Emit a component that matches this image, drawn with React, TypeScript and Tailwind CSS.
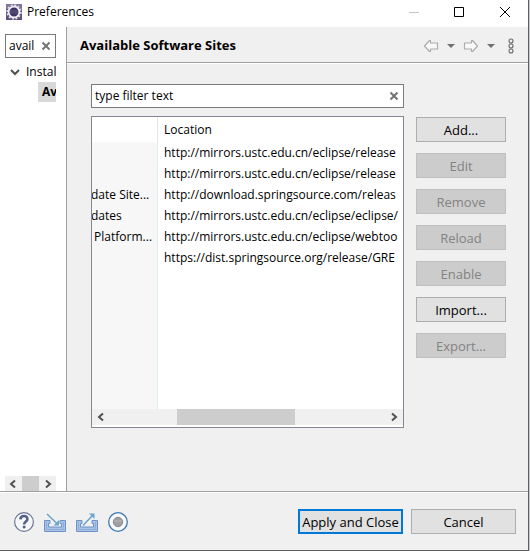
import React from "react";

const updateSites = [
  { name: "", location: "http://mirrors.ustc.edu.cn/eclipse/release" },
  { name: "", location: "http://mirrors.ustc.edu.cn/eclipse/release" },
  { name: "date Site...", location: "http://download.springsource.com/releas" },
  { name: "dates", location: "http://mirrors.ustc.edu.cn/eclipse/eclipse/" },
  { name: " Platform...", location: "http://mirrors.ustc.edu.cn/eclipse/webtoo" },
  { name: "", location: "https://dist.springsource.org/release/GRE" },
];

const siteActions = [
  { label: "Add...", enabled: true },
  { label: "Edit", enabled: false },
  { label: "Remove", enabled: false },
  { label: "Reload", enabled: false },
  { label: "Enable", enabled: false },
  { label: "Import...", enabled: true },
  { label: "Export...", enabled: false },
];

function EclipseLogo() {
  return (
    <svg width="16" height="16" viewBox="0 0 16 16" aria-hidden="true">
      <rect width="16" height="16" fill="#5c4f7a" />
      <path d="M0 0h16v5H0z" fill="#81759a" />
      <circle cx="8" cy="8" r="6.8" fill="none" stroke="#dcd8e2" strokeWidth="1.8" strokeDasharray="2 1.56" />
      <circle cx="8" cy="8" r="5.4" fill="#3d3560" stroke="#f1eef4" strokeWidth="1.8" />
      <path d="M4 7h8M4 9h8" stroke="#6c648c" strokeWidth="0.8" />
    </svg>
  );
}

function Cross() {
  return (
    <svg width="10" height="10" viewBox="0 0 10 10" aria-hidden="true">
      <path d="M1.5 1.5l7 7M8.5 1.5l-7 7" stroke="#737373" strokeWidth="2" />
    </svg>
  );
}

function Chevron({ direction }: { direction: "left" | "right" | "down" }) {
  const paths = {
    left: "M7 1.5L3 5l4 3.5",
    right: "M3 1.5L7 5 3 8.5",
    down: "M1 3l4 4 4-4",
  };
  return (
    <svg width="10" height="10" viewBox="0 0 10 10" className="shrink-0" aria-hidden="true">
      <path d={paths[direction]} fill="none" stroke="#505050" strokeWidth="2" />
    </svg>
  );
}

function NavArrow({ forward = false }: { forward?: boolean }) {
  return (
    <svg width="16" height="14" viewBox="0 0 16 14" aria-hidden="true">
      <path
        d={
          forward
            ? "M1.5 4h7V1.5h1L14.5 7l-5 5.5h-1V10h-7z"
            : "M14.5 4h-7V1.5h-1L1.5 7l5 5.5h1V10h7z"
        }
        fill="#f8f8f8"
        stroke="#acacac"
        strokeWidth="1.2"
        strokeLinejoin="round"
      />
    </svg>
  );
}

function Triangle() {
  return (
    <svg width="8" height="4" viewBox="0 0 8 4" aria-hidden="true">
      <path d="M0 0h8L4 4z" fill="#707070" />
    </svg>
  );
}

function MenuDots() {
  return (
    <svg width="6" height="16" viewBox="0 0 6 16" fill="none" stroke="#6a6a6a" strokeWidth="1.1" aria-hidden="true">
      <circle cx="3" cy="3" r="2" />
      <circle cx="3" cy="8" r="2" />
      <circle cx="3" cy="13" r="2" />
    </svg>
  );
}

function HelpIcon() {
  return (
    <svg width="20" height="20" viewBox="0 0 20 20" fill="none" aria-hidden="true">
      <circle cx="10" cy="10" r="9.4" fill="#f6f7fa" stroke="#6b7794" strokeWidth="1.2" />
      <path d="M6.4 7.4C6.6 2.9 13.6 3 13.4 7.2c0 2.3-3.3 2.4-3.3 5.2" stroke="#50618a" strokeWidth="2.6" />
      <path d="M8.8 13.8h2.7v2.5H8.8z" fill="#50618a" />
    </svg>
  );
}

function TrayIcon({ outgoing = false }: { outgoing?: boolean }) {
  return (
    <svg width="22" height="20" viewBox="0 0 22 20" fill="none" aria-hidden="true">
      <path
        d="M0.5 8.5H6v3H4.5V15h13v-3.5H16v-3h5.5v11h-21z"
        fill="#a9c3e6"
        stroke="#6f91c6"
      />
      <path d="M2.5 10v7.5h17V10" stroke="#8fabd8" />
      {outgoing ? (
        <g>
          <path d="M7 13.5L17 3" stroke="#69a5cd" strokeWidth="1.5" />
          <path d="M13 1.5h5.5V7z" fill="#69a5cd" />
        </g>
      ) : (
        <g>
          <path d="M3 2l10 9.5" stroke="#69a5cd" strokeWidth="1.5" />
          <path d="M15 8v5.5H9.5z" fill="#69a5cd" />
        </g>
      )}
    </svg>
  );
}

function RecordIcon() {
  return (
    <svg width="20" height="20" viewBox="0 0 20 20" aria-hidden="true">
      <circle cx="10" cy="10" r="9.3" fill="#f7fbff" stroke="#3f78b0" strokeWidth="1.3" />
      <circle cx="10" cy="10" r="4.7" fill="#a0a0a0" stroke="#878787" />
      <path d="M6 9h8" stroke="#b9b9b9" />
    </svg>
  );
}

function FilterBox({ id, label, value }: { id: string; label: string; value: string }) {
  return (
    <div className="flex h-6 items-center border border-[#7a7a7a] bg-white pr-1">
      <input
        id={id}
        aria-label={label}
        defaultValue={value}
        className="min-w-0 flex-1 pl-[3px] text-[12px] leading-5 outline-none"
      />
      <button type="button" aria-label={`Clear ${label}`}><Cross /></button>
    </div>
  );
}

function Titlebar() {
  return (
    <header className="flex h-[27px] shrink-0 items-center bg-white pb-1 pl-1.5">
      <EclipseLogo />
      <h1 className="flex-1 pl-[5px] text-[12px] leading-5">Preferences</h1>
      <div className="flex items-center">
        <button type="button" aria-label="Minimize" className="flex w-[45px] justify-center">
          <svg width="10" height="10" viewBox="0 0 10 10"><path d="M0 5.5h10" stroke="#c4c4c4" /></svg>
        </button>
        <button type="button" aria-label="Maximize" className="flex w-[45px] justify-center">
          <svg width="10" height="10" viewBox="0 0 10 10" fill="none"><path d="M.5.5h9v9h-9z" stroke="#000" /></svg>
        </button>
        <button type="button" aria-label="Close" className="flex w-[47px] justify-center">
          <svg width="10" height="10" viewBox="0 0 10 10"><path d="M0 0l10 10M10 0L0 10" stroke="#000" /></svg>
        </button>
      </div>
    </header>
  );
}

function Sidebar() {
  return (
    <aside className="flex w-[67px] shrink-0 flex-col border-r border-[#a0a0a0] bg-white pt-[7px] pr-[10px] pl-[5px]">
      <FilterBox id="page-filter" label="page filter" value="avail" />
      <ul className="flex-1 overflow-hidden pt-1 text-[12px] whitespace-nowrap">
        <li>
          <div className="flex h-5 items-center gap-1.5 pl-[5px]">
            <Chevron direction="down" />
            <span>Instal</span>
          </div>
          <ul className="pl-[33px]">
            <li className="h-5 overflow-hidden bg-[#d9d9d9] pl-1 leading-5 font-bold">Av</li>
          </ul>
        </li>
      </ul>
      <div className="flex h-[15px] items-center justify-between bg-[#f0f0f0] px-[3px]">
        <button type="button" aria-label="Scroll tree left"><Chevron direction="left" /></button>
        <div className="h-full w-[17px] bg-[#cdcdcd]" />
        <button type="button" aria-label="Scroll tree right"><Chevron direction="right" /></button>
      </div>
    </aside>
  );
}

function SitesTable() {
  return (
    <div className="flex min-h-0 flex-1 flex-col border border-[#828790] bg-white pb-0.5">
      <div className="min-h-0 flex-1 overflow-hidden">
        <table className="h-full w-full table-fixed border-separate border-spacing-0 text-left text-[12px] whitespace-pre">
          <thead>
            <tr className="h-[25px]">
              <th aria-label="Name" className="w-[66px] border-r border-[#e5e5e5] p-0" />
              <th className="py-0 pr-0 pl-1.5 font-normal">Location</th>
            </tr>
          </thead>
          <tbody>
            {updateSites.map((site, i) => (
              <tr key={i} className="h-[21px]">
                <td className="overflow-hidden border-r border-[#e3ebf3] bg-[#f7f7f7] p-0 leading-5">
                  <div className="-ml-px">{site.name}</div>
                </td>
                <td className="overflow-hidden py-0 pr-0 pl-1.5 leading-5">{site.location}</td>
              </tr>
            ))}
            <tr>
              <td className="border-r border-[#e3ebf3] bg-[#f7f7f7]" />
              <td />
            </tr>
          </tbody>
        </table>
      </div>
      <div className="flex h-4 shrink-0 items-center bg-[#f0f0f0] px-1">
        <button type="button" aria-label="Scroll table left"><Chevron direction="left" /></button>
        <div className="flex h-full flex-1 pl-[71px]">
          <div className="h-full w-[118px] bg-[#cdcdcd]" />
        </div>
        <button type="button" aria-label="Scroll table right"><Chevron direction="right" /></button>
      </div>
    </div>
  );
}

export default function App() {
  return (
    <div className="h-screen min-h-[450px] bg-[#c9ccd2] pr-px font-['Open_Sans','Noto_Sans',sans-serif] text-[13px] text-black">
      <div className="flex h-full flex-col border-r border-b border-[#5e5e5e] bg-[#f0f0f0]">
        <Titlebar />
        <div className="flex min-h-0 flex-1">
          <Sidebar />
          <main className="flex min-w-0 flex-1 flex-col">
            <div className="flex h-9 items-center border-b border-[#a0a0a0] pt-0.5 pr-3.5 pl-[13px]">
              <h2 className="flex-1 font-bold whitespace-nowrap">Available Software Sites</h2>
              <div className="flex items-center">
                <button type="button" aria-label="Back"><NavArrow /></button>
                <button type="button" aria-label="Back history" className="ml-2"><Triangle /></button>
                <button type="button" aria-label="Forward" className="ml-2"><NavArrow forward /></button>
                <button type="button" aria-label="Forward history" className="ml-2"><Triangle /></button>
                <button type="button" aria-label="View menu" className="ml-[13px]"><MenuDots /></button>
              </div>
            </div>
            <div className="flex min-h-0 flex-1 gap-3 border-t border-white pt-5 pr-[22px] pb-[63px] pl-6">
              <div className="flex min-w-0 flex-1 flex-col gap-2">
                <FilterBox id="site-filter" label="site filter" value="type filter text" />
                <SitesTable />
              </div>
              <div className="flex w-[90px] shrink-0 flex-col gap-[11px] pt-[33px]">
                {siteActions.map((action) => (
                  <button
                    key={action.label}
                    type="button"
                    disabled={!action.enabled}
                    className="flex h-[25px] shrink-0 items-center justify-center border border-[#adadad] bg-[#e1e1e1] leading-5 disabled:border-[#bfbfbf] disabled:bg-[#cccccc] disabled:text-[#838383]"
                  >
                    {action.label}
                  </button>
                ))}
              </div>
            </div>
          </main>
        </div>
        <footer className="shrink-0 border-t border-[#a0a0a0]">
          <div className="flex items-center border-t border-white pt-4 pr-3 pb-4 pl-3.5">
            <div className="flex flex-1 items-center gap-2.5">
              <button type="button" aria-label="Help"><HelpIcon /></button>
              <button type="button" aria-label="Import preferences"><TrayIcon /></button>
              <button type="button" aria-label="Export preferences"><TrayIcon outgoing /></button>
              <button type="button" aria-label="Record preferences"><RecordIcon /></button>
            </div>
            <div className="flex gap-2">
              <button type="button" className="flex h-[25px] w-[105px] items-center justify-center border-2 border-[#0078d7] bg-[#e1e1e1] leading-5 whitespace-nowrap">Apply and Close</button>
              <button type="button" className="flex h-[25px] w-[105px] items-center justify-center border border-[#adadad] bg-[#e1e1e1] leading-5">Cancel</button>
            </div>
          </div>
        </footer>
      </div>
    </div>
  );
}
